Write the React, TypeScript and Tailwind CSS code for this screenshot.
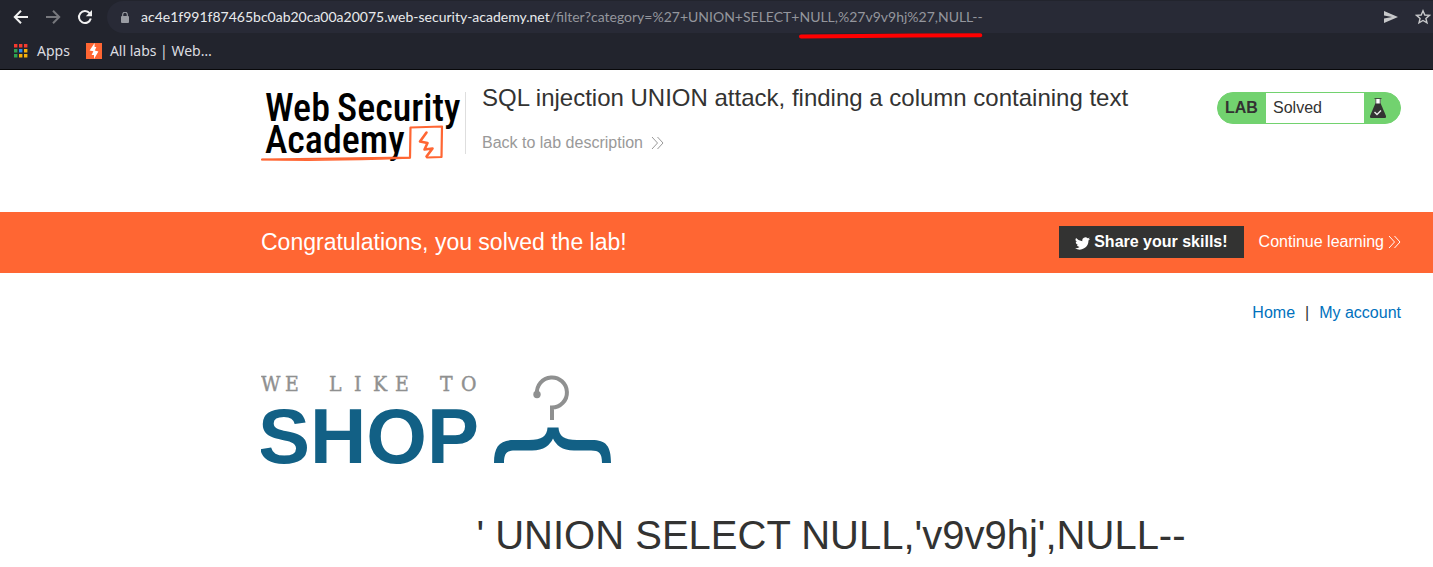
import type { ReactNode } from "react";

function BrowserBar() {
  return (
    <div className="border-b border-[#08080a] bg-[#22242d] font-['Noto_Sans',sans-serif] text-[#e8eaed]">
      <div className="flex h-[33px] items-center">
        <div className="flex w-[107px] shrink-0 items-center gap-2 pl-[9px]">
          <button type="button" aria-label="Back" className="flex size-6 items-center justify-center">
            <svg viewBox="0 0 16 16" className="size-4" fill="none" stroke="#f1f1f1" strokeWidth="2">
              <path d="M15 8H2.5M8 1.8L1.8 8L8 14.2" />
            </svg>
          </button>
          <button type="button" aria-label="Forward" className="flex size-6 items-center justify-center">
            <svg viewBox="0 0 16 16" className="size-4" fill="none" stroke="#77787d" strokeWidth="2">
              <path d="M1 8H13.5M8 1.8L14.2 8L8 14.2" />
            </svg>
          </button>
          <button type="button" aria-label="Reload" className="flex size-6 items-center justify-center">
            <svg viewBox="0 0 16 16" className="size-4" fill="none" stroke="#f1f1f1" strokeWidth="2">
              <path d="M13.8 9.6A6 6 0 1 1 12.6 4.2" />
              <path d="M15 1V7.2H8.8Z" fill="#f1f1f1" stroke="none" />
            </svg>
          </button>
        </div>
        <div className="mt-px flex h-8 min-w-0 grow items-center rounded-l-full bg-[#282a36] pl-[14px]">
          <svg viewBox="0 0 8 11" className="h-[11px] w-2 shrink-0" fill="#9a9ca3">
            <rect y="4" width="8" height="7" rx="1" />
            <path d="M1.7 4V2.6a2.3 2.3 0 0 1 4.6 0V4" fill="none" stroke="#9a9ca3" strokeWidth="1.1" />
          </svg>
          <div className="ml-3 grow whitespace-nowrap font-['Lato',sans-serif] text-sm leading-5 text-[#94969d]">
            <span className="text-[#e8eaed]">ac4e1f991f87465bc0ab20ca00a20075.web-security-academy.net</span>
            /filter?category=%27+UNION+SELECT+
            <span className="relative">
              NULL,%27v9v9hj%27,NULL--
              <svg
                viewBox="0 0 178 6"
                preserveAspectRatio="none"
                className="absolute top-full left-0 mt-2 h-[6px] w-full"
                fill="none"
                stroke="#ff0000"
                strokeWidth="4"
                strokeLinecap="round"
              >
                <path d="M2 3.5L60 3L110 2.5L176 2.3" />
              </svg>
            </span>
          </div>
          <button type="button" aria-label="Send page" className="flex w-11 justify-center">
            <svg viewBox="0 0 14 12" className="h-3 w-[14px]" fill="#c7c8ca">
              <path d="M0 0L14 6L0 12V7.5L8 6L0 4.5Z" />
            </svg>
          </button>
          <button type="button" aria-label="Bookmark this page" className="flex w-5 justify-center">
            <svg viewBox="0 0 16 16" className="size-4" fill="none" stroke="#c7c8ca" strokeWidth="1.4">
              <path d="M8 1.8L9.8 6L14.4 6.4L10.9 9.4L12 13.9L8 11.5L4 13.9L5.1 9.4L1.6 6.4L6.2 6Z" />
            </svg>
          </button>
        </div>
      </div>
      <div className="flex h-9 items-center gap-4 pl-[14px] text-sm leading-5 text-[#dcdde0]">
        <a href="#apps" className="flex items-center gap-[9px]">
          <svg viewBox="0 0 14 14" className="size-[14px]">
            <path d="M0 0h3.4v3.4H0zM5 0h3.4v3.4H5zM10 0h3.4v3.4H10z" fill="#f33b2f" />
            <path d="M0 5h3.4v3.4H0zM0 10h3.4v3.4H0z" fill="#2da452" />
            <path d="M5 5h3.4v3.4H5z" fill="#2b8af0" />
            <path d="M5 10h3.4v3.4H5zM10 5h3.4v3.4H10zM10 10h3.4v3.4H10z" fill="#f5b10a" />
          </svg>
          Apps
        </a>
        <a href="#labs" className="flex items-center gap-2">
          <svg viewBox="0 0 16 16" className="size-4">
            <path d="M0 0H16V16H0Z" fill="#ff6633" />
            <path d="M8.6 0L3.6 7.4L7.4 8.2L5.6 12L8 12V16L12.4 8.5L8.8 7.6L10.4 4L8.6 4Z" fill="#fff" />
          </svg>
          All labs | Web…
        </a>
      </div>
    </div>
  );
}

function Container({ className, children }: { className: string; children: ReactNode }) {
  return <div className={`mr-8 ml-auto max-w-[1140px] ${className}`}>{children}</div>;
}

function Chevrons() {
  return (
    <svg viewBox="0 0 13 14" className="h-[14px] w-[13px]" fill="none" stroke="currentColor" strokeWidth="1">
      <path d="M1 1L6.5 7L1 13M6.5 1L12 7L6.5 13" />
    </svg>
  );
}

function AcademyLogo() {
  return (
    <svg viewBox="0 0 204 72" className="h-[72px] w-[204px] shrink-0" role="img" aria-label="Web Security Academy">
      <g fill="#000" fontFamily="'Roboto Condensed', Roboto, sans-serif" fontSize="38" fontWeight="500">
        <text x="4" y="29">Web</text>
        <text x="76" y="29">Security</text>
        <text x="4" y="61">Academy</text>
      </g>
      <g transform="translate(0 -2)" fill="none" stroke="#ff6633" strokeLinejoin="round" strokeLinecap="round">
        <path d="M1 69.5Q60 69 149 67.5L149.5 37.5L181 36.5L180.500 67L166 67.5" strokeWidth="2.200" />
        <path d="M1 69.5Q50 71 120 69L149 68" strokeWidth="1.5" />
        <path d="M165.5 42.5L159 51.5L166.5 53L163.5 59.5L171.5 58.5L165.5 66.5" strokeWidth="2.6" />
      </g>
    </svg>
  );
}

function ShopLogo() {
  return (
    <svg viewBox="0 0 351 90" className="h-[90px] w-[351px]" role="img" aria-label="We like to shop">
      <text
        x="0 24 44 68 93 112 134 156 179 200"
        y="16"
        fill="#8f9090"
        stroke="#8f9090"
        strokeWidth="0.4"
        fontFamily="'DejaVu Serif Condensed', 'DejaVu Serif', serif"
        fontSize="21"
      >
        WE LIKE TO
      </text>
      <text x="-3" y="88" fill="#126085" fontFamily="'Liberation Sans', sans-serif" fontSize="78" fontWeight="700">
        SHOP
      </text>
      <path d="M276 19A15 15 0 1 1 291 32.5V45" fill="none" stroke="#8f9090" strokeWidth="4" />
      <circle cx="276" cy="19.5" r="3.7" fill="#8f9090" />
      <path
        d="M286.5 52.5H297.5C298 61 303 65 316 65H331C345 65 350 71 350 88H341C341 78 338 75.5 330 75.5H313C301 75.5 295 70 292 63.5C289 70 283 75.5 271 75.5H254C246 75.5 243 78 243 88H233C233 71 239 65 253 65H268C281 65 286 61 286.5 52.5Z"
        fill="#126085"
      />
    </svg>
  );
}

function LabStatus() {
  return (
    <div className="mt-[22px] flex h-8 w-[184px] shrink-0 items-stretch overflow-hidden rounded-full border border-[#72d26f] bg-[#72d26f] text-base leading-[30px]">
      <span className="w-12 pl-[7px] font-bold">LAB</span>
      <span className="grow bg-white pl-[7px]">Solved</span>
      <span className="flex w-9 items-center pl-[6px]">
        <svg viewBox="0 0 16 20" className="h-5 w-4">
          <path d="M5.5 1H10.5V6H5.5Z" fill="#fff" />
          <path d="M4.5 0.5H11.5M5.8 1V6M10.2 1V6" stroke="#333332" strokeWidth="0.8" />
          <path d="M5.3 5.5H10.7L16 18Q16.2 20 15 20H1Q-0.2 20 0 18Z" fill="#333332" />
          <path d="M4.5 14L7 16.5L11 12.5" fill="none" stroke="#e8e8e8" strokeWidth="1.4" />
        </svg>
      </span>
    </div>
  );
}

export default function App() {
  return (
    <div className="overflow-hidden bg-white font-['Liberation_Sans',sans-serif] text-[#333332]">
      <BrowserBar />
      <header>
        <Container className="flex h-[142px] items-start">
          <div className="mt-[22px] flex h-[62px] border-r border-[#dedede]">
            <AcademyLogo />
          </div>
          <div className="ml-4 grow pt-3">
            <h2 className="text-2xl leading-8">SQL injection UNION attack, finding a column containing text</h2>
            <a href="#lab" className="mt-[17px] inline-flex items-center gap-2 text-base leading-6 text-[#999]">
              Back to lab description <Chevrons />
            </a>
          </div>
          <LabStatus />
        </Container>
      </header>
      <section className="bg-[#ff6633] text-white">
        <Container className="flex items-center pt-[14px] pb-[15px]">
          <h4 className="grow text-[23px] leading-8">Congratulations, you solved the lab!</h4>
          <button type="button" className="flex h-8 items-center gap-1 bg-[#333332] px-4 text-base font-bold">
            <svg viewBox="0 0 24 20" className="mt-[2px] h-[13px] w-[15px]" fill="#fff">
              <path d="M24 2.4a9.8 9.8 0 0 1-2.8.8A5 5 0 0 0 23.3.5a10 10 0 0 1-3.1 1.2 4.9 4.9 0 0 0-8.4 4.5A14 14 0 0 1 1.7 1a4.9 4.9 0 0 0 1.5 6.6A4.9 4.9 0 0 1 1 7a4.9 4.9 0 0 0 3.9 4.9 5 5 0 0 1-2.2.1 4.9 4.9 0 0 0 4.6 3.4A9.9 9.9 0 0 1 0 17.5 14 14 0 0 0 21.5 5a10 10 0 0 0 2.5-2.6Z" />
            </svg>
            Share your skills!
          </button>
          <a href="#next" className="ml-[15px] flex items-center gap-1 text-base">
            Continue learning <Chevrons />
          </a>
        </Container>
      </section>
      <main>
        <Container className="pt-7">
          <nav className="flex justify-end gap-[10px] text-base leading-6">
            <a href="#home" className="text-[#0071bd]">Home</a>
            <span>|</span>
            <a href="#account" className="text-[#0071bd]">My account</a>
          </nav>
          <div className="mt-[50px]">
            <ShopLogo />
          </div>
          <h1 className="mt-[46px] text-center text-[40px] leading-[48px]">' UNION SELECT NULL,'v9v9hj',NULL--</h1>
        </Container>
      </main>
    </div>
  );
}
